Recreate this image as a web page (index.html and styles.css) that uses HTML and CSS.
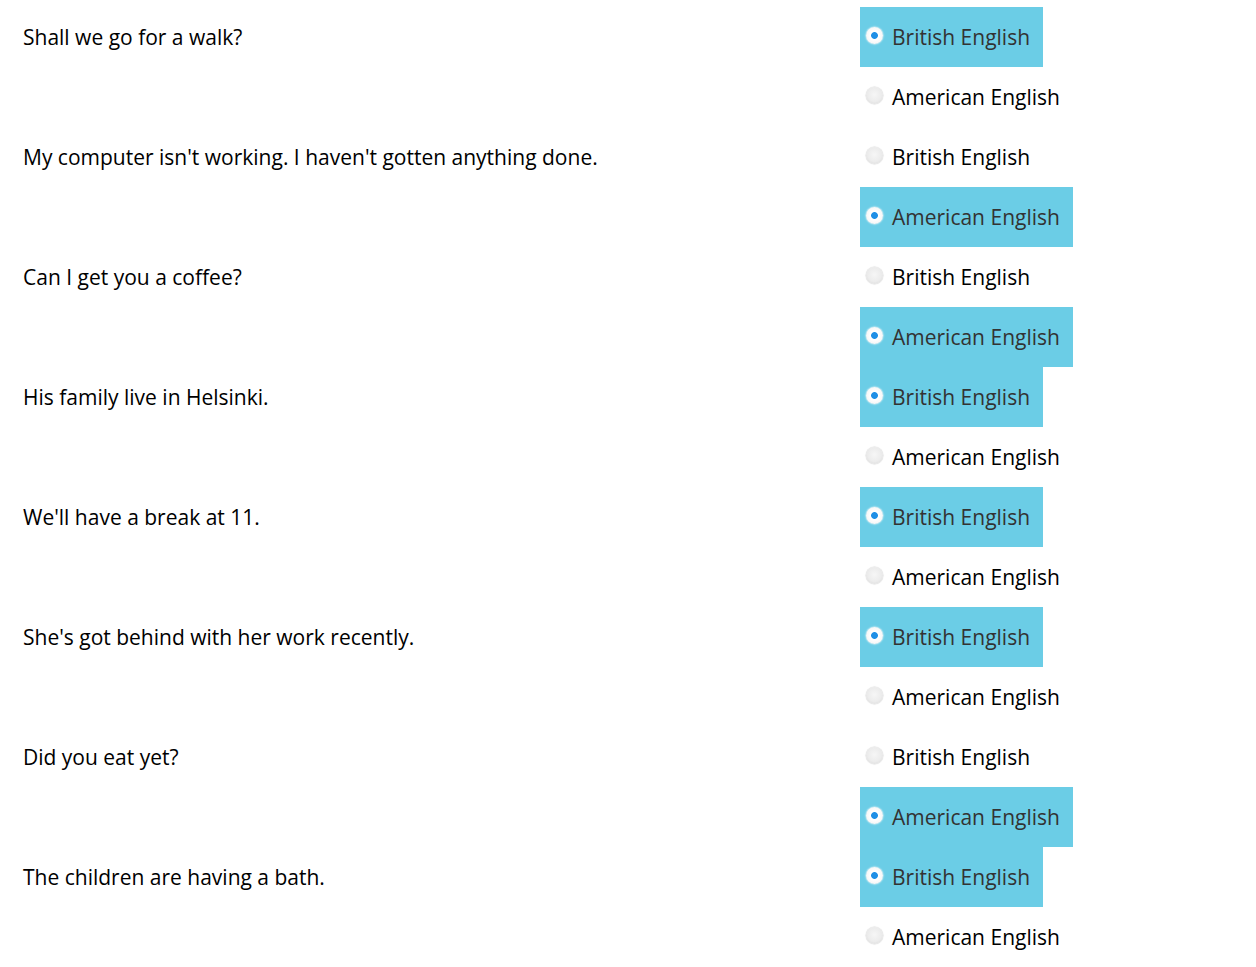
FILE: index.html
```html
<!DOCTYPE html>
<html>
<head>
<meta charset="utf-8">
<link rel="stylesheet" href="styles.css">
</head>
<body>
<div class="quiz">
  <div class="row">
    <div class="q">Shall we go for a walk?</div>
    <div class="opts">
      <div class="opt sel"><span class="radio on"></span>British English</div>
      <div class="opt"><span class="radio"></span>American English</div>
    </div>
  </div>
  <div class="row">
    <div class="q">My computer isn't working. I haven't gotten anything done.</div>
    <div class="opts">
      <div class="opt"><span class="radio"></span>British English</div>
      <div class="opt sel"><span class="radio on"></span>American English</div>
    </div>
  </div>
  <div class="row">
    <div class="q">Can I get you a coffee?</div>
    <div class="opts">
      <div class="opt"><span class="radio"></span>British English</div>
      <div class="opt sel"><span class="radio on"></span>American English</div>
    </div>
  </div>
  <div class="row">
    <div class="q">His family live in Helsinki.</div>
    <div class="opts">
      <div class="opt sel"><span class="radio on"></span>British English</div>
      <div class="opt"><span class="radio"></span>American English</div>
    </div>
  </div>
  <div class="row">
    <div class="q">We'll have a break at 11.</div>
    <div class="opts">
      <div class="opt sel"><span class="radio on"></span>British English</div>
      <div class="opt"><span class="radio"></span>American English</div>
    </div>
  </div>
  <div class="row">
    <div class="q">She's got behind with her work recently.</div>
    <div class="opts">
      <div class="opt sel"><span class="radio on"></span>British English</div>
      <div class="opt"><span class="radio"></span>American English</div>
    </div>
  </div>
  <div class="row">
    <div class="q">Did you eat yet?</div>
    <div class="opts">
      <div class="opt"><span class="radio"></span>British English</div>
      <div class="opt sel"><span class="radio on"></span>American English</div>
    </div>
  </div>
  <div class="row">
    <div class="q">The children are having a bath.</div>
    <div class="opts">
      <div class="opt sel"><span class="radio on"></span>British English</div>
      <div class="opt"><span class="radio"></span>American English</div>
    </div>
  </div>
</div>
</body>
</html>
```
FILE: styles.css
```css
html, body {
  margin: 0;
  padding: 0;
  background: #fff;
}
body {
  padding: 7px 8px 0 8px;
  font-family: "Open Sans", "Liberation Sans", sans-serif;
  font-size: 21px;
  color: #000;
}
.row {
  display: grid;
  grid-template-columns: 852px auto;
}
.q {
  height: 60px;
  display: flex;
  align-items: center;
  padding-left: 15px;
}
.opts {
  display: flex;
  flex-direction: column;
  align-items: flex-start;
}
.opt {
  height: 60px;
  display: flex;
  align-items: center;
  padding: 0 13px 0 6px;
  color: #000;
  box-sizing: border-box;
}
.opt.sel {
  background: #6bcde6;
  color: #333;
}
.radio {
  width: 17px;
  height: 17px;
  border-radius: 50%;
  box-sizing: border-box;
  margin-right: 9px;
  margin-top: -4px;
  background: radial-gradient(circle at 50% 45%, #f6f6f6 0%, #ececec 55%, #d2d2d2 100%);
  box-shadow: 0 0 1px 0.5px #dadada;
}
.radio.on {
  background: radial-gradient(circle, #1e8fe6 0 3px, #ffffff 3.8px, #f4f4f4 80%, #e6f3f7 100%);
  box-shadow: 0 0 1.5px 0.5px #dff3f8;
}
```
